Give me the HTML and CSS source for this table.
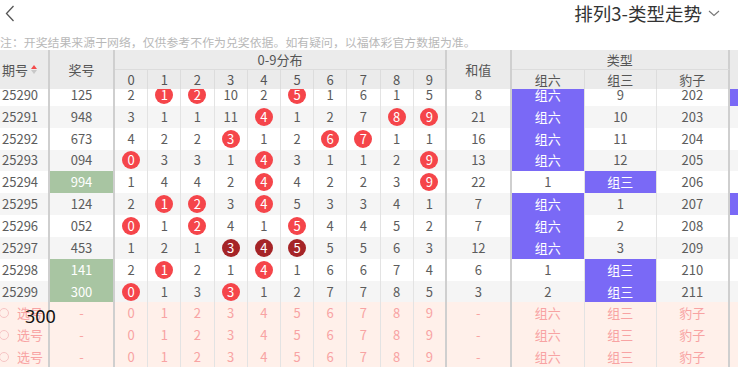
FILE: index.html
```html
<!DOCTYPE html>
<html lang="zh">
<head>
<meta charset="utf-8">
<title>排列3-类型走势</title>
<link rel="stylesheet" href="styles.css">
</head>
<body>
<header class="topbar">
  <svg class="back" width="10" height="17" viewBox="0 0 10 17"><path d="M8.5 1 L1.5 8.5 L8.5 16" fill="none" stroke="#555" stroke-width="1.3"/></svg>
  <div class="title">排列3-类型走势<svg class="caret" width="12" height="7" viewBox="0 0 12 7"><path d="M1 1 L6 5.5 L11 1" fill="none" stroke="#777" stroke-width="1.1"/></svg></div>
</header>
<p class="note">注：开奖结果来源于网络，仅供参考不作为兑奖依据。如有疑问，以福体彩官方数据为准。</p>
<div class="table">
  <div class="thead">
    <div class="h h-no">期号<i class="sort"><em class="up"></em><em class="down"></em></i></div>
    <div class="h h-num">奖号</div>
    <div class="h h-dist">0-9分布</div>
    <div class="h h-d">0</div><div class="h h-d">1</div><div class="h h-d">2</div><div class="h h-d">3</div><div class="h h-d">4</div>
    <div class="h h-d">5</div><div class="h h-d">6</div><div class="h h-d">7</div><div class="h h-d">8</div><div class="h h-d h-d9">9</div>
    <div class="h h-sum">和值</div>
    <div class="h h-type">类型</div>
    <div class="h h-t">组六</div><div class="h h-t">组三</div><div class="h h-t h-t3">豹子</div>
    <div class="h h-ex"></div>
  </div>
  <div class="tbody">
    <div class="row"><span>25290</span><span>125</span><span>2</span><span><b class="ball">1</b></span><span><b class="ball">2</b></span><span>10</span><span>2</span><span><b class="ball">5</b></span><span>1</span><span>6</span><span>1</span><span>5</span><span>8</span><span class="pu">组六</span><span>9</span><span>202</span><span class="pu"></span></div>
    <div class="row"><span>25291</span><span>948</span><span>3</span><span>1</span><span>1</span><span>11</span><span><b class="ball">4</b></span><span>1</span><span>2</span><span>7</span><span><b class="ball">8</b></span><span><b class="ball">9</b></span><span>21</span><span class="pu">组六</span><span>10</span><span>203</span><span></span></div>
    <div class="row"><span>25292</span><span>673</span><span>4</span><span>2</span><span>2</span><span><b class="ball">3</b></span><span>1</span><span>2</span><span><b class="ball">6</b></span><span><b class="ball">7</b></span><span>1</span><span>1</span><span>16</span><span class="pu">组六</span><span>11</span><span>204</span><span></span></div>
    <div class="row"><span>25293</span><span>094</span><span><b class="ball">0</b></span><span>3</span><span>3</span><span>1</span><span><b class="ball">4</b></span><span>3</span><span>1</span><span>1</span><span>2</span><span><b class="ball">9</b></span><span>13</span><span class="pu">组六</span><span>12</span><span>205</span><span></span></div>
    <div class="row"><span>25294</span><span class="gr">994</span><span>1</span><span>4</span><span>4</span><span>2</span><span><b class="ball">4</b></span><span>4</span><span>2</span><span>2</span><span>3</span><span><b class="ball">9</b></span><span>22</span><span>1</span><span class="pu">组三</span><span>206</span><span></span></div>
    <div class="row"><span>25295</span><span>124</span><span>2</span><span><b class="ball">1</b></span><span><b class="ball">2</b></span><span>3</span><span><b class="ball">4</b></span><span>5</span><span>3</span><span>3</span><span>4</span><span>1</span><span>7</span><span class="pu">组六</span><span>1</span><span>207</span><span class="pu"></span></div>
    <div class="row"><span>25296</span><span>052</span><span><b class="ball">0</b></span><span>1</span><span><b class="ball">2</b></span><span>4</span><span>1</span><span><b class="ball">5</b></span><span>4</span><span>4</span><span>5</span><span>2</span><span>7</span><span class="pu">组六</span><span>2</span><span>208</span><span></span></div>
    <div class="row"><span>25297</span><span>453</span><span>1</span><span>2</span><span>1</span><span><b class="ball dk">3</b></span><span><b class="ball dk">4</b></span><span><b class="ball dk">5</b></span><span>5</span><span>5</span><span>6</span><span>3</span><span>12</span><span class="pu">组六</span><span>3</span><span>209</span><span></span></div>
    <div class="row"><span>25298</span><span class="gr">141</span><span>2</span><span><b class="ball">1</b></span><span>2</span><span>1</span><span><b class="ball">4</b></span><span>1</span><span>6</span><span>6</span><span>7</span><span>4</span><span>6</span><span>1</span><span class="pu">组三</span><span>210</span><span></span></div>
    <div class="row"><span>25299</span><span class="gr">300</span><span><b class="ball">0</b></span><span>1</span><span>3</span><span><b class="ball">3</b></span><span>1</span><span>2</span><span>7</span><span>7</span><span>8</span><span>5</span><span>3</span><span>2</span><span class="pu">组三</span><span>211</span><span></span></div>
    <div class="row sel"><span class="pick"><i class="radio"></i>选号<em class="ghost">300</em></span><span>-</span><span>0</span><span>1</span><span>2</span><span>3</span><span>4</span><span>5</span><span>6</span><span>7</span><span>8</span><span>9</span><span>-</span><span>组六</span><span>组三</span><span>豹子</span><span></span></div>
    <div class="row sel"><span class="pick"><i class="radio"></i>选号</span><span>-</span><span>0</span><span>1</span><span>2</span><span>3</span><span>4</span><span>5</span><span>6</span><span>7</span><span>8</span><span>9</span><span>-</span><span>组六</span><span>组三</span><span>豹子</span><span></span></div>
    <div class="row sel"><span class="pick"><i class="radio"></i>选号</span><span>-</span><span>0</span><span>1</span><span>2</span><span>3</span><span>4</span><span>5</span><span>6</span><span>7</span><span>8</span><span>9</span><span>-</span><span>组六</span><span>组三</span><span>豹子</span><span></span></div>
  </div>
</div>
</body>
</html>
```
FILE: styles.css
```css
* { box-sizing: border-box; }
html, body { margin: 0; padding: 0; }
body {
  width: 738px;
  height: 367px;
  overflow: hidden;
  background: #fff;
  font-family: "Noto Sans CJK SC", "Noto Sans", sans-serif;
  color: #555;
}
.topbar {
  height: 33px;
  display: flex;
  align-items: flex-start;
  justify-content: space-between;
  padding: 2px 18px 0 5px;
}
.back { display: block; margin-top: 3px; }
.title {
  display: flex;
  align-items: center;
  font-size: 18.5px;
  line-height: 22px;
  color: #333;
}
.caret { margin-left: 6px; margin-top: 1px; }
.note {
  margin: 0;
  height: 17px;
  font-size: 11.9px;
  line-height: 17px;
  color: #b8b8b8;
  white-space: nowrap;
}
.table {
  --cols: 50px 65px repeat(10, 33.2px) 65px 73px 72px 73px 60px;
  width: 790px;
}
.thead {
  position: relative;
  z-index: 2;
  display: grid;
  grid-template-columns: var(--cols);
  grid-template-rows: 20px 19px;
  background: #ebebeb;
  font-size: 13px;
  color: #555;
}
.h {
  display: flex;
  align-items: center;
  justify-content: center;
  border-right: 1px solid #dcdcdc;
  line-height: 1;
}
.h-no { grid-column: 1; grid-row: 1 / 3; justify-content: flex-start; padding-left: 2px; border-right: 2px solid #cfcfcf; }
.h-num { grid-column: 2; grid-row: 1 / 3; border-right: 2px solid #cfcfcf; }
.h-dist { grid-column: 3 / 13; grid-row: 1; border-right: 2px solid #cfcfcf; border-bottom: 1px solid #dcdcdc; }
.h-d { grid-row: 2; }
.h-d9 { border-right: 2px solid #cfcfcf; }
.h-sum { grid-column: 13; grid-row: 1 / 3; border-right: 2px solid #cfcfcf; }
.h-type { grid-column: 14 / 17; grid-row: 1; border-right: 2px solid #cfcfcf; border-bottom: 1px solid #dcdcdc; }
.h-t { grid-row: 2; }
.h-t3 { border-right: 2px solid #cfcfcf; }
.h-ex { grid-column: 17; grid-row: 1 / 3; border-right: 0; }
.sort {
  display: inline-flex;
  flex-direction: column;
  gap: 1px;
  margin-left: 3px;
}
.sort em { display: block; width: 0; height: 0; border-left: 3px solid transparent; border-right: 3px solid transparent; }
.sort .up { border-bottom: 4px solid #f44b4b; }
.sort .down { border-top: 4px solid #c8c8c8; }

.tbody { margin-top: -5px; }
.row {
  display: grid;
  grid-template-columns: var(--cols);
  height: 21.85px;
  font-size: 13px;
  color: #5c5c5c;
  background: #fff;
}
.row:nth-child(even) { background: #f5f5f5; }
.row > span {
  display: flex;
  align-items: center;
  justify-content: center;
  border-right: 1px solid #e3e3e3;
  line-height: 12px;
  min-width: 0;
  white-space: nowrap;
}
.row > span:nth-child(1) { justify-content: flex-start; padding-left: 2px; }
.row > span:nth-child(1),
.row > span:nth-child(2),
.row > span:nth-child(12),
.row > span:nth-child(13),
.row > span:nth-child(16) { border-right: 2px solid #cfcfcf; }
.row > span:nth-child(17) { border-right: 0; }

.ball {
  display: inline-flex;
  align-items: center;
  justify-content: center;
  width: 18px;
  height: 18px;
  border-radius: 50%;
  background: #f5454a;
  color: #fff;
  font-weight: normal;
  font-size: 13px;
  line-height: 12px;
}
.ball.dk { background: #a52427; }
.row > span.pu { background: #7a69f6; color: #fff; }
.row > span.gr { background: #a8c5a2; color: #fff; }

.row.sel { background: #fff0ea; color: #f8a3a3; }
.row.sel > span.pick { position: relative; padding-left: 0; }
.radio {
  display: inline-block;
  width: 10px;
  height: 10px;
  border: 1px solid #f6c4c4;
  border-radius: 50%;
  margin: 0 8px 0 -1px;
}
.ghost {
  position: absolute;
  left: 25px;
  top: 4px;
  font-style: normal;
  font-size: 18px;
  line-height: 21px;
  color: #111;
  font-family: "Noto Sans", sans-serif;
}
```
